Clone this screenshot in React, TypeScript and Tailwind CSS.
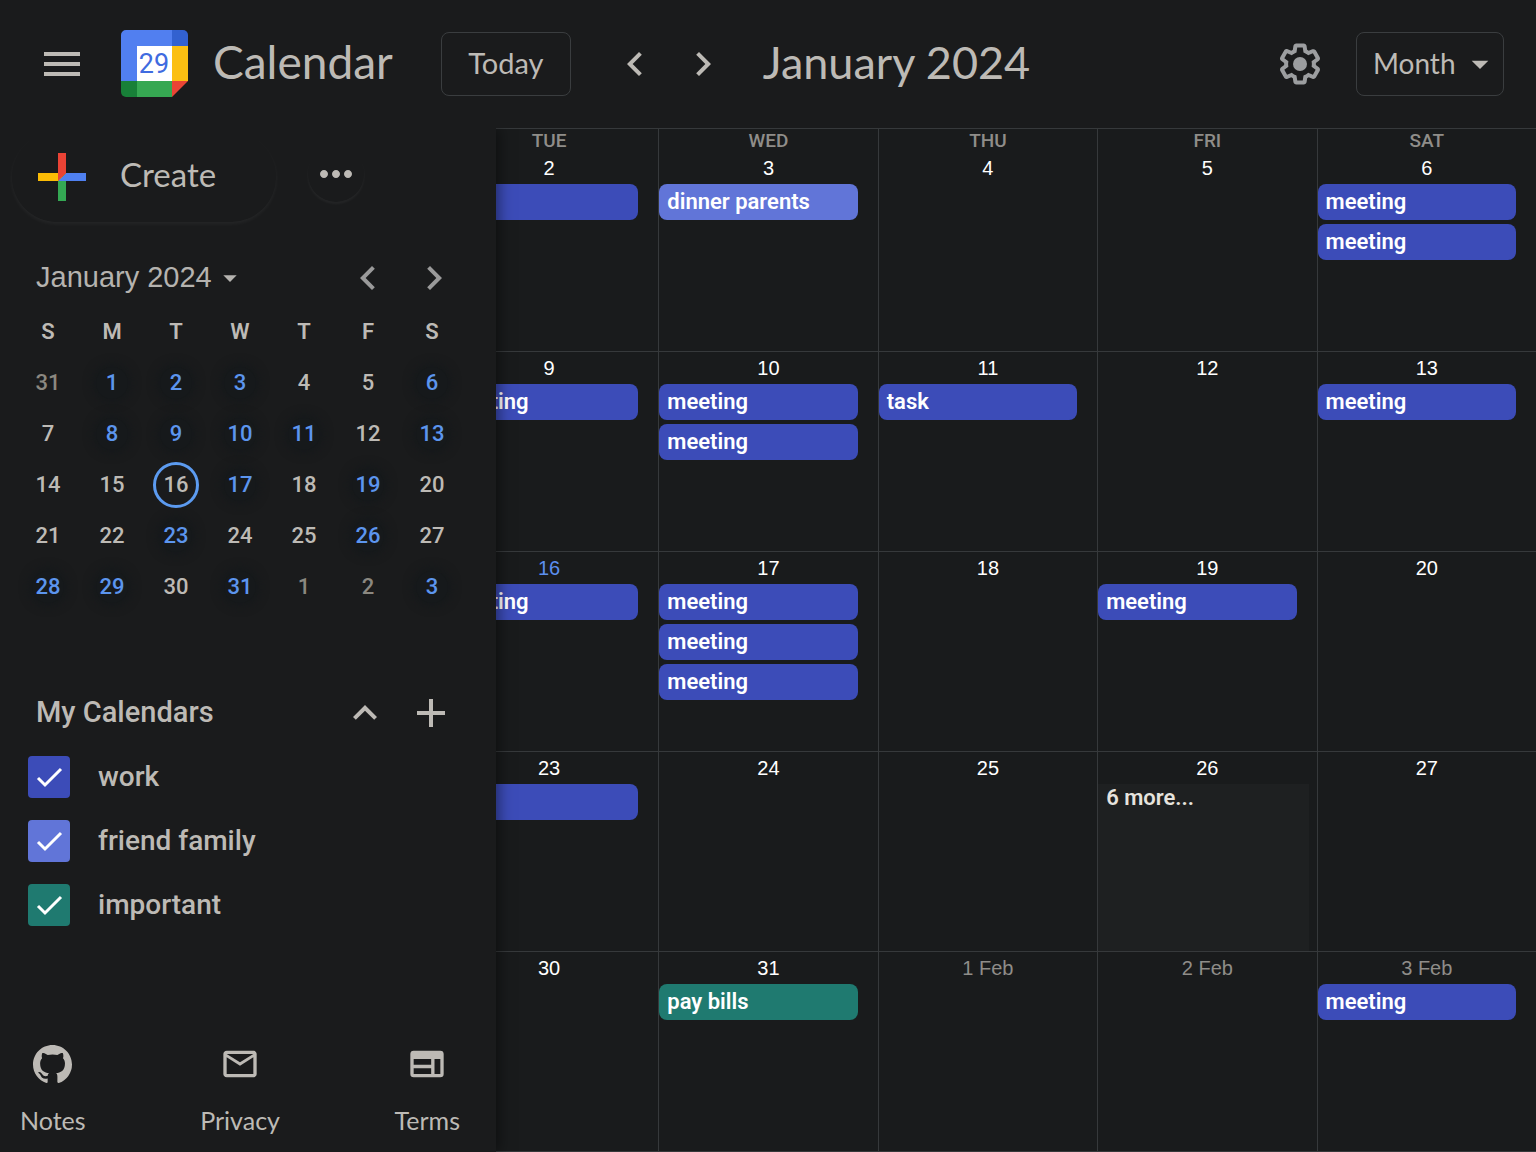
import { useState } from "react";
import {
  MdAdd,
  MdArrowDropDown,
  MdChevronLeft,
  MdChevronRight,
  MdExpandLess,
  MdMailOutline,
  MdMenu,
  MdMoreHoriz,
} from "react-icons/md";

const BRAND = "font-[Lato,Roboto,sans-serif]";
const ARIAL = "font-['Liberation_Sans',Arial,sans-serif]";

type Tone = "indigo" | "periwinkle" | "teal";

const toneClass: Record<Tone, string> = {
  indigo: "bg-[#3c4cb8]",
  periwinkle: "bg-[#6175d8]",
  teal: "bg-[#1f7a70]",
};

type CalEvent = { title: string; tone: Tone };
type Day = { label: string; dim?: boolean; today?: boolean; events?: CalEvent[]; more?: string };

const meeting: CalEvent = { title: "meeting", tone: "indigo" };
const task: CalEvent = { title: "task", tone: "indigo" };

const weekdays = ["", "", "TUE", "WED", "THU", "FRI", "SAT"];

const weeks: Day[][] = [
  [
    { label: "" },
    { label: "" },
    { label: "2", events: [task] },
    { label: "3", events: [{ title: "dinner parents", tone: "periwinkle" }] },
    { label: "4" },
    { label: "5" },
    { label: "6", events: [meeting, meeting] },
  ],
  [
    { label: "" },
    { label: "" },
    { label: "9", events: [meeting] },
    { label: "10", events: [meeting, meeting] },
    { label: "11", events: [task] },
    { label: "12" },
    { label: "13", events: [meeting] },
  ],
  [
    { label: "" },
    { label: "" },
    { label: "16", today: true, events: [meeting] },
    { label: "17", events: [meeting, meeting, meeting] },
    { label: "18" },
    { label: "19", events: [meeting] },
    { label: "20" },
  ],
  [
    { label: "" },
    { label: "" },
    { label: "23", events: [task] },
    { label: "24" },
    { label: "25" },
    { label: "26", more: "6 more..." },
    { label: "27" },
  ],
  [
    { label: "" },
    { label: "" },
    { label: "30" },
    { label: "31", events: [{ title: "pay bills", tone: "teal" }] },
    { label: "1 Feb", dim: true },
    { label: "2 Feb", dim: true },
    { label: "3 Feb", dim: true, events: [meeting] },
  ],
];

type MiniDay = { n: number; kind?: "busy" | "dim" | "today" };
const plain = (n: number): MiniDay => ({ n });
const busy = (n: number): MiniDay => ({ n, kind: "busy" });
const dim = (n: number): MiniDay => ({ n, kind: "dim" });

const miniWeeks: MiniDay[][] = [
  [dim(31), busy(1), busy(2), busy(3), plain(4), plain(5), busy(6)],
  [plain(7), busy(8), busy(9), busy(10), busy(11), plain(12), busy(13)],
  [plain(14), plain(15), { n: 16, kind: "today" }, busy(17), plain(18), busy(19), plain(20)],
  [plain(21), plain(22), busy(23), plain(24), plain(25), busy(26), plain(27)],
  [busy(28), busy(29), plain(30), busy(31), dim(1), dim(2), busy(3)],
];

function Logo() {
  return (
    <svg viewBox="0 0 68 68" className="size-[68px]" aria-hidden="true">
      <path d="M5 0h46v16H16v35H0V5a5 5 0 0 1 5-5z" fill="#517ff0" />
      <path d="M51 0h11a5 5 0 0 1 5 5v11H51z" fill="#3261d0" />
      <path d="M51 16h16v35H51z" fill="#fbbf12" />
      <path d="M16 51h35v16H16z" fill="#36a852" />
      <path d="M0 51h16v16H5a5 5 0 0 1-5-5z" fill="#188038" />
      <path d="M51 51h16L51 67z" fill="#ea4535" />
      <path d="M16 16h35v35H16z" fill="#fff" />
      <text
        x="33"
        y="43"
        textAnchor="middle"
        fontFamily="Roboto, sans-serif"
        fontSize="27"
        fontWeight="400"
        fill="#3f6be0"
      >
        29
      </text>
    </svg>
  );
}

function Gear() {
  return (
    <svg viewBox="0 0 24 24" className="size-12" fill="currentColor" aria-hidden="true">
      <path d="M13.85 22.25h-3.7c-.74 0-1.36-.54-1.45-1.27l-.27-1.89c-.27-.14-.53-.29-.79-.46l-1.8.72c-.7.26-1.47-.03-1.81-.65L2.2 15.53c-.35-.66-.2-1.44.36-1.88l1.53-1.19c-.01-.15-.02-.3-.02-.46 0-.15.01-.31.02-.46l-1.52-1.19c-.59-.45-.74-1.26-.37-1.88l1.85-3.19c.34-.62 1.11-.9 1.79-.63l1.81.73c.26-.17.52-.32.78-.46l.27-1.91c.09-.7.71-1.25 1.44-1.25h3.7c.74 0 1.36.54 1.45 1.27l.27 1.89c.27.14.53.29.79.46l1.8-.72c.71-.26 1.48.03 1.82.65l1.84 3.18c.36.66.2 1.44-.36 1.88l-1.52 1.19c.01.15.02.3.02.46s-.01.31-.02.46l1.52 1.19c.56.45.72 1.23.37 1.86l-1.86 3.22c-.34.62-1.11.9-1.8.63l-1.8-.72c-.26.17-.52.32-.78.46l-.27 1.91c-.1.68-.72 1.22-1.46 1.22zm-3.23-2h2.76l.37-2.55.53-.22c.44-.18.88-.44 1.34-.78l.45-.34 2.38.96 1.38-2.4-2.03-1.58.07-.56c.03-.26.06-.51.06-.78s-.03-.53-.06-.78l-.07-.56 2.03-1.58-1.39-2.4-2.39.96-.45-.35c-.42-.32-.87-.58-1.33-.77l-.52-.22-.37-2.55h-2.76l-.37 2.55-.53.21c-.44.19-.88.44-1.34.79l-.45.33-2.38-.95-1.39 2.39 2.03 1.58-.07.56a7 7 0 0 0-.06.79c0 .26.02.53.06.78l.07.56-2.03 1.58 1.38 2.4 2.39-.96.45.35c.43.33.86.58 1.33.77l.53.22.38 2.55z" />
      <circle cx="12" cy="12" r="3.5" />
    </svg>
  );
}

function CreatePlus() {
  return (
    <svg viewBox="0 0 36 36" className="size-[72px]" aria-hidden="true">
      <path d="M16 16v14h4V20z" fill="#34a853" />
      <path d="M30 16H20l-4 4h14z" fill="#4f80f0" />
      <path d="M6 16v4h10l4-4z" fill="#fbbc05" />
      <path d="M20 16V6h-4v14z" fill="#ea4335" />
    </svg>
  );
}

function GithubMark() {
  return (
    <svg viewBox="0 0 16 16" className="size-[39px]" fill="currentColor" aria-hidden="true">
      <path d="M8 0C3.58 0 0 3.58 0 8c0 3.54 2.29 6.53 5.47 7.59.4.07.55-.17.55-.38 0-.19-.01-.82-.01-1.49-2.01.37-2.53-.49-2.69-.94-.09-.23-.48-.94-.82-1.13-.28-.15-.68-.52-.01-.53.63-.01 1.08.58 1.23.82.72 1.21 1.87.87 2.33.66.07-.52.28-.87.51-1.07-1.78-.2-3.64-.89-3.64-3.95 0-.87.31-1.59.82-2.15-.08-.2-.36-1.02.08-2.12 0 0 .67-.21 2.2.82.64-.18 1.32-.27 2-.27s1.36.09 2 .27c1.53-1.04 2.2-.82 2.2-.82.44 1.1.16 1.92.08 2.12.51.56.82 1.27.82 2.15 0 3.07-1.87 3.75-3.65 3.95.29.25.54.73.54 1.48 0 1.07-.01 1.93-.01 2.2 0 .21.15.46.55.38A8.01 8.01 0 0 0 16 8c0-4.42-3.58-8-8-8z" />
    </svg>
  );
}

function WebIcon() {
  return (
    <svg viewBox="0 0 24 24" className="size-10" fill="currentColor" fillRule="evenodd" aria-hidden="true">
      <path d="M4 4h16a2 2 0 0 1 2 2v12a2 2 0 0 1-2 2H4a2 2 0 0 1-2-2V6a2 2 0 0 1 2-2zM4 9v3.500h10.500V9zM4 14.500V18h10.500v-3.500zM16.500 9v9H20V9z" />
    </svg>
  );
}

function Header() {
  return (
    <header className={`flex h-32 shrink-0 items-center pr-8 pl-[38px] text-[#bdbab5] ${BRAND}`}>
      <button aria-label="Main menu">
        <MdMenu className="size-12" />
      </button>
      <div className="ml-[35px] flex items-center gap-6">
        <Logo />
        <span className="pb-1 text-[46px] leading-[56px]">Calendar</span>
      </div>
      <div className="flex flex-1 items-center">
        <button className="ml-12 h-16 w-[130px] rounded-lg border border-[#3a3d3f] pb-0.5 text-[29px]">Today</button>
        <button aria-label="Previous month" className="ml-10">
          <MdChevronLeft className="size-12" />
        </button>
        <button aria-label="Next month" className="ml-5">
          <MdChevronRight className="size-12" />
        </button>
        <h1 className="ml-9 pb-1 text-[45px] leading-[56px]">January 2024</h1>
      </div>
      <button aria-label="Settings" className="mr-8 text-[#9c9ea0]">
        <Gear />
      </button>
      <div className="relative">
        <select
          aria-label="View"
          defaultValue="Month"
          className="h-16 w-[148px] appearance-none rounded-lg border border-[#3a3d3f] bg-transparent pb-0.5 pl-4 text-[28px]"
        >
          <option>Month</option>
        </select>
        <MdArrowDropDown className="pointer-events-none absolute top-3 right-1 size-10" />
      </div>
    </header>
  );
}

function MiniCalendar() {
  return (
    <section className="mt-7">
      <div className={`flex h-14 items-center pr-[38px] pl-9 text-[#b5b3af] ${ARIAL}`}>
        <button className="flex items-center text-[29px]">
          January 2024
          <MdArrowDropDown className="ml-0.5 size-8" />
        </button>
        <div className="ml-auto flex gap-[18px] text-[#9a9a9a]">
          <button aria-label="Previous">
            <MdChevronLeft className="size-12" />
          </button>
          <button aria-label="Next">
            <MdChevronRight className="size-12" />
          </button>
        </div>
      </div>
      <table className="mr-8 ml-4 w-[448px] table-fixed text-center text-[22px] text-[#bdbab5]">
        <thead>
          <tr className="h-[51px]">
            {["S", "M", "T", "W", "T", "F", "S"].map((d, i) => (
              <th key={i} className="p-0 font-semibold">
                {d}
              </th>
            ))}
          </tr>
        </thead>
        <tbody>
          {miniWeeks.map((week, w) => (
            <tr key={w} className="h-[51px]">
              {week.map((d, i) => (
                <td key={i} className="p-0">
                  <button
                    className={
                      "mx-auto flex items-center justify-center rounded-full " +
                      (d.kind === "busy"
                        ? "size-8 bg-[#16191b] font-medium text-[#5c95ee] shadow-[0_0_8px_4px_#16191b]"
                        : d.kind === "dim"
                          ? "size-[46px] font-medium text-[#8b8880]"
                          : d.kind === "today"
                            ? "size-[46px] border-[3px] border-[#5c9bf0] font-medium"
                            : "size-[46px] font-medium")
                    }
                  >
                    {d.n}
                  </button>
                </td>
              ))}
            </tr>
          ))}
        </tbody>
      </table>
    </section>
  );
}

function CalendarCheck({ name, tone }: { name: string; tone: Tone }) {
  const [on, setOn] = useState(true);
  return (
    <label className="flex h-16 items-center gap-7 text-[28px] font-medium">
      <span className="relative flex">
        <input
          type="checkbox"
          checked={on}
          onChange={() => setOn(!on)}
          className={`size-[42px] appearance-none rounded ${toneClass[tone]}`}
        />
        {on && (
          <svg viewBox="0 0 42 42" className="pointer-events-none absolute inset-0" aria-hidden="true">
            <path d="M10 22l7 7L33 13" fill="none" stroke="#fff" strokeWidth="3" />
          </svg>
        )}
      </span>
      {name}
    </label>
  );
}

function Sidebar() {
  return (
    <aside className="absolute inset-y-0 left-0 flex w-[496px] flex-col bg-[#1a1b1c] text-[#bdbab5] shadow-[2px_0_14px_rgba(0,0,0,0.5)]">
      <div className="flex gap-8 pt-1 pl-3">
        <button
          className={`flex h-[90px] w-[264px] items-center gap-[22px] rounded-full pl-[14px] text-[33px] shadow-[0_2px_4px_rgba(255,255,255,0.05)] ${BRAND}`}
        >
          <CreatePlus />
          <span className="pb-1">Create</span>
        </button>
        <button
          aria-label="More"
          className="mt-[14px] flex size-14 items-center justify-center rounded-full shadow-[0_2px_3px_rgba(255,255,255,0.05)]"
        >
          <MdMoreHoriz className="size-12" />
        </button>
      </div>
      <MiniCalendar />
      <section className="mt-[69px]">
        <div className="flex h-16 items-center pr-[41px] pl-9">
          <h2 className="text-[29px] font-medium">My Calendars</h2>
          <button aria-label="Collapse" className="ml-auto">
            <MdExpandLess className="size-12" />
          </button>
          <button aria-label="Add calendar" className="ml-[18px]">
            <MdAdd className="size-12" />
          </button>
        </div>
        <div className="flex flex-col pl-7">
          <CalendarCheck name="work" tone="indigo" />
          <CalendarCheck name="friend family" tone="periwinkle" />
          <CalendarCheck name="important" tone="teal" />
        </div>
      </section>
      <nav className={`mt-auto flex justify-between pr-9 pb-4 pl-5 text-[25px] leading-8 ${BRAND}`}>
        <a href="#notes" className="flex flex-col items-center gap-4">
          <span className="flex h-12 items-center">
            <GithubMark />
          </span>
          Notes
        </a>
        <a href="#privacy" className="flex flex-col items-center gap-4">
          <span className="flex h-12 items-center">
            <MdMailOutline className="size-10" />
          </span>
          Privacy
        </a>
        <a href="#terms" className="flex flex-col items-center gap-4">
          <span className="flex h-12 items-center">
            <WebIcon />
          </span>
          Terms
        </a>
      </nav>
    </aside>
  );
}

function DayCell({ day }: { day: Day }) {
  return (
    <div className="flex min-w-0 flex-col border-b border-l border-[#36393b]">
      <div
        className={
          `h-8 shrink-0 text-center text-xl leading-8 ${ARIAL} ` +
          (day.today ? "text-[#5c8ff0]" : day.dim ? "text-[#8f8d89]" : "text-white")
        }
      >
        {day.label}
      </div>
      {day.more ? (
        <button className="mr-2 flex flex-1 items-start bg-[#1e2021] pl-2 text-[22px] leading-7 font-semibold text-[#e6e3de]">
          {day.more}
        </button>
      ) : (
        <div className="flex flex-col gap-1 pr-5">
          {(day.events ?? []).map((e, i) => (
            <button
              key={i}
              className={`h-9 truncate rounded-lg px-2 text-left text-[22px] leading-9 font-semibold text-white ${toneClass[e.tone]}`}
            >
              {e.title}
            </button>
          ))}
        </div>
      )}
    </div>
  );
}

export default function App() {
  return (
    <div className="flex min-h-screen flex-col bg-[#1a1b1c] font-[Roboto,sans-serif]">
      <Header />
      <main className="relative flex flex-1 flex-col overflow-hidden bg-[#191b1c]">
        <div className="grid h-6 shrink-0 grid-cols-7 border-t border-[#36393b] text-center text-[19px] leading-6 font-medium text-[#8f8d89]">
          {weekdays.map((d, i) => (
            <div key={i} className="border-l border-[#36393b]">
              {d}
            </div>
          ))}
        </div>
        {weeks.map((week, w) => (
          <div key={w} className="grid min-h-[200px] flex-1 grid-cols-7">
            {week.map((day, i) => (
              <DayCell key={i} day={day} />
            ))}
          </div>
        ))}
        <Sidebar />
      </main>
    </div>
  );
}
